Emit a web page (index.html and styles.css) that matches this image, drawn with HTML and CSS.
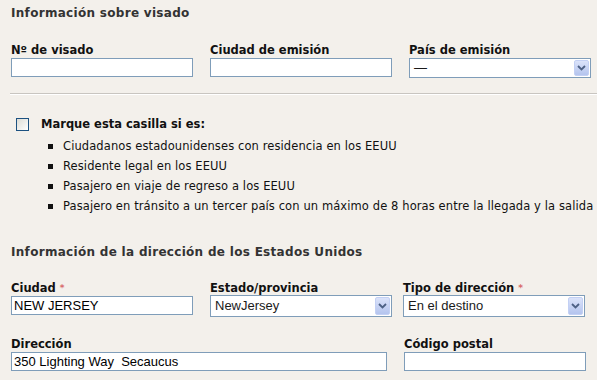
FILE: index.html
```html
<!DOCTYPE html>
<html lang="es">
<head>
    <meta charset="UTF-8">
    <title>Información sobre visado</title>
    <link rel="stylesheet" href="styles.css">
</head>
<body>
    <div class="page">
        <h2 class="section-title">Información sobre visado</h2>
        <div class="row">
            <div class="field">
                <label>Nº de visado</label>
                <input type="text" class="text-input">
            </div>
            <div class="field">
                <label>Ciudad de emisión</label>
                <input type="text" class="text-input">
            </div>
            <div class="field">
                <label>País de emisión</label>
                <div class="select-box">
                    <span class="select-value">—</span>
                    <span class="select-arrow"><svg width="9" height="6" viewBox="0 0 9 6"><path d="M1 1 L4.5 4.5 L8 1" fill="none" stroke="#4d6185" stroke-width="1.8"/></svg></span>
                </div>
            </div>
        </div>

        <div class="divider"></div>

        <div class="check-block">
            <div class="check-row">
                <span class="check-box"></span>
                <span class="check-label">Marque esta casilla si es:</span>
            </div>
            <ul class="check-list">
                <li>Ciudadanos estadounidenses con residencia en los EEUU</li>
                <li>Residente legal en los EEUU</li>
                <li>Pasajero en viaje de regreso a los EEUU</li>
                <li>Pasajero en tránsito a un tercer país con un máximo de 8 horas entre la llegada y la salida del vuelo</li>
            </ul>
        </div>

        <h2 class="section-title second">Información de la dirección de los Estados Unidos</h2>
        <div class="row address">
            <div class="field">
                <label>Ciudad <span class="req">*</span></label>
                <input type="text" class="text-input" value="NEW JERSEY">
            </div>
            <div class="field short-gap">
                <label>Estado/provincia</label>
                <div class="select-box tall">
                    <span class="select-value">NewJersey</span>
                    <span class="select-arrow"><svg width="9" height="6" viewBox="0 0 9 6"><path d="M1 1 L4.5 4.5 L8 1" fill="none" stroke="#4d6185" stroke-width="1.8"/></svg></span>
                </div>
            </div>
            <div class="field">
                <label>Tipo de dirección <span class="req">*</span></label>
                <div class="select-box tall">
                    <span class="select-value">En el destino</span>
                    <span class="select-arrow"><svg width="9" height="6" viewBox="0 0 9 6"><path d="M1 1 L4.5 4.5 L8 1" fill="none" stroke="#4d6185" stroke-width="1.8"/></svg></span>
                </div>
            </div>
        </div>
        <div class="row">
            <div class="field wide">
                <label>Dirección</label>
                <input type="text" class="text-input" value="350 Lighting Way  Secaucus">
            </div>
            <div class="field">
                <label>Código postal</label>
                <input type="text" class="text-input">
            </div>
        </div>
    </div>
</body>
</html>
```

FILE: styles.css
```css
body {
    margin: 0;
    background-color: #f3f0eb;
    font-family: "DejaVu Sans", Verdana, sans-serif;
    color: #1a1a1a;
    overflow: hidden;
}

.page {
    padding: 5px 0 0 11px;
    width: 700px;
}

.section-title {
    margin: 0;
    font-size: 12px;
    font-weight: bold;
    color: #333;
    line-height: 16px;
    letter-spacing: 0.3px;
}

.section-title.second {
    margin-top: 28px;
}

.row {
    display: flex;
    margin-top: 22px;
}

.row.address {
    margin-top: 21px;
}

.row + .row {
    margin-top: 20px;
}

.field {
    width: 182px;
    margin-right: 17px;
    display: flex;
    flex-direction: column;
}

.field.short-gap {
    margin-right: 11px;
}

.field.wide {
    width: 376px;
    margin-right: 17px;
}

.field label {
    font-size: 11.5px;
    font-weight: bold;
    line-height: 14px;
    margin-bottom: 1px;
    color: #111;
}

.req {
    color: #d86b6b;
    font-size: 9px;
    vertical-align: top;
}

.text-input {
    box-sizing: border-box;
    width: 182px;
    height: 19px;
    margin: 0;
    padding: 0 2px;
    border: 1px solid #7f9db9;
    background-color: #fff;
    font-family: "Liberation Sans", Arial, sans-serif;
    font-size: 13px;
    color: #000;
}

.field.wide .text-input {
    width: 376px;
}

.select-box {
    position: relative;
    box-sizing: border-box;
    width: 182px;
    height: 20px;
    border: 1px solid #7f9db9;
    background-color: #fff;
    font-family: "Liberation Sans", Arial, sans-serif;
    font-size: 13px;
    line-height: 18px;
    padding-left: 4px;
}

.select-box.tall {
    height: 22px;
    margin-top: -1px;
    line-height: 20px;
}

.select-arrow {
    position: absolute;
    top: 1px;
    bottom: 1px;
    right: 1px;
    width: 15px;
    border-radius: 2px;
    background: linear-gradient(#dbe3fa, #b4c4ee);
    border: 1px solid #c3d0f4;
    box-sizing: border-box;
    display: flex;
    align-items: center;
    justify-content: center;
}

.divider {
    margin: 15px 0 0 -1px;
    height: 0;
    border-top: 1px solid #c8c5c0;
    border-bottom: 1px solid #fff;
}

.check-block {
    margin-top: 22px;
    padding-left: 5px;
}

.check-row {
    display: flex;
    align-items: center;
}

.check-box {
    box-sizing: border-box;
    width: 13px;
    height: 13px;
    border: 1px solid #1c5180;
    background: linear-gradient(135deg, #dcdcd5, #fff);
    margin-right: 12px;
}

.check-label {
    font-size: 11.5px;
    font-weight: bold;
    color: #111;
}

.check-list {
    list-style: none;
    margin: 5px 0 0 0;
    padding: 0 0 0 32px;
}

.check-list li {
    position: relative;
    font-size: 11.5px;
    line-height: 20px;
    padding-left: 15px;
    letter-spacing: 0.1px;
    white-space: nowrap;
    color: #111;
}

.check-list li::before {
    content: "";
    position: absolute;
    left: 0;
    top: 8px;
    width: 5px;
    height: 5px;
    background-color: #111;
}
```
